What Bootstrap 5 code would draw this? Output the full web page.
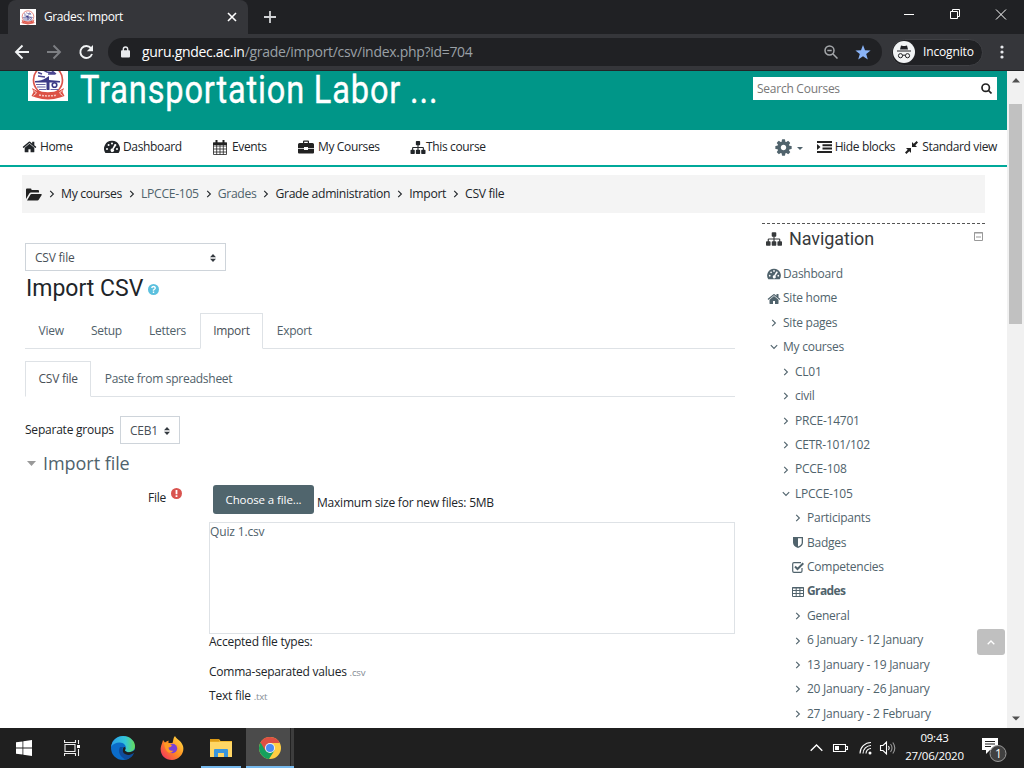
<!DOCTYPE html>
<html lang="en">
<head>
<meta charset="utf-8">
<title>Grades: Import</title>
<meta name="viewport" content="width=device-width, initial-scale=1">
<link href="https://cdn.jsdelivr.net/npm/bootstrap@5.3.0/dist/css/bootstrap.min.css" rel="stylesheet">
<style>
body{width:1024px;height:768px;overflow:hidden;font:12px/18px "Open Sans",sans-serif;letter-spacing:-.22px;color:#212529;background:#fff}
svg{display:block;flex:none}
a{text-decoration:none;color:inherit}
.desk{height:768px}
.tabstrip{height:34px;background:#202124;flex:none}
.tab-on{width:240px;height:34px;margin-left:8px;background:#35363a;border-radius:8px 8px 0 0;color:#fff;padding:0 11px 0 12px;letter-spacing:-.4px}
.tab-on span{line-height:34px}
.winbtns{margin-top:-6px}
.toolbar{height:37px;background:#35363a;border-bottom:1px solid #232427;flex:none;padding-left:14px}
.omni{width:774px;height:28px;margin-left:14px;margin-right:9px;border-radius:14px;background:#202124;color:#9aa0a6;font-size:14px;padding:0 11px 0 13px}
.omni b{font-weight:400;color:#fff}
.url{margin-left:12px;letter-spacing:-.3px}
.incog{width:92px;height:27px;border-radius:14px;background:#202124;border:1px solid #3f4044;color:#fff;font-size:12px;padding-left:1px;letter-spacing:-.15px}
.viewport{height:657px;overflow:hidden;flex:none}
.page{width:1007px;overflow:hidden;flex:none}
.banner{height:59px;background:#009688;padding:0 10px 0 28px}
.crest{width:40px;height:40px;margin-top:-10px}
.site-title{font:400 38.5px/38px Roboto,sans-serif;color:#fff;margin:0 0 0 12px;white-space:nowrap;transform:scaleX(.845);transform-origin:0 0;letter-spacing:1px;-webkit-text-stroke:.4px #fff}
.finder{width:244px;height:23px;background:#fff;margin-top:6px;padding:0 5px 0 4px;color:#777;letter-spacing:-.25px}
.menu{height:37px;border-bottom:2px solid #00a99a;padding:0 10px 1px 22px;letter-spacing:-.35px}
.crumbs{height:38px;background:#f4f4f4;margin:8px 22px 0;padding-left:4px;font-size:12.2px;letter-spacing:-.33px;white-space:nowrap}
.gt{margin:0 6px 0 7px}
.slate{color:#50636c}
.main{width:710px;margin-left:25px}
.pick{height:28px;border:1px solid #ced4da;padding:1px 9px 0 9px;color:#495057}
h2.ttl{font:400 23px/28px Roboto,sans-serif;letter-spacing:0;margin:0 0 0 1px;color:#212529}
.nav-tabs{--bs-nav-link-padding-x:12.6px;--bs-nav-link-padding-y:0;--bs-border-radius:0;--bs-nav-tabs-border-radius:0;--bs-nav-link-color:#50616a;--bs-nav-tabs-link-active-color:#495057}
.nav-tabs .nav-link{line-height:34px;font-size:12px;letter-spacing:-.28px}
.section-head{height:28px;color:#50636c;font-size:18px;letter-spacing:-.05px;margin-top:5px}
.side{width:223px;margin-left:27px;margin-top:10px;border-top:1px dashed #555;color:#50636c}
.side h3{font:400 18px/22px Roboto,sans-serif;letter-spacing:-.1px;color:#373a3c;margin:0 0 0 7px}
.side-head{height:30px;padding:0 1px 0 4px;margin-bottom:8px}
.tree{font-size:12px;letter-spacing:-.24px;line-height:24.43px;white-space:nowrap}
.tree>div{height:24.43px;display:flex;align-items:center}
.tree a{margin-left:2px}
.ic{width:14px;display:flex;justify-content:center;flex:none}
.l1{padding-left:5px}.l2{padding-left:17px}.l3{padding-left:29px}
.pickfile{width:101px;height:29px;border-radius:3px;background:#50656d;color:#fff;font-size:11.5px;font-weight:500;letter-spacing:-.1px;padding:0;line-height:29px;--bs-btn-border-width:0}
.dropbox{width:526px;height:112px;border:1px solid #dee2e6;color:#50616a;letter-spacing:-.15px}
.ext{font-size:9.6px;color:#868e96}
.bar-v{width:17px;background:#f1f1f1}
.thumb{width:13px;height:220px;background:#c1c1c1;margin-top:21px}
.totop{position:absolute;left:977px;top:629px;width:28px;height:26px;border-radius:3px;background:#c0c0c0}
.taskbar{height:40px;background:#1f1f1f;flex:none;color:#fff}
.slot{height:40px;display:flex;align-items:center;justify-content:center}
.run{border-bottom:2px solid #76b9ed;padding-top:2px}
.chrome-slot{width:48px;margin-left:5px;background:linear-gradient(90deg,#4b4b4b 44px,#222 44px 45px,#3d3d3d 45px)}
.clock{width:59px;margin-left:9px;font-size:11.5px;line-height:18px;letter-spacing:-.25px;white-space:nowrap;margin-top:-2px}
</style>
</head>
<body>
<svg width="0" height="0" class="position-absolute">
<symbol id="home" viewBox="0 0 1792 1792"><path fill="currentColor" d="M1472 992v480q0 26-19 45t-45 19h-384v-384h-256v384h-384q-26 0-45-19t-19-45v-480q0-1 .5-3t.5-3l575-474 575 474q1 2 1 6zm223-69l-62 74q-8 9-21 11h-3q-13 0-21-7l-692-577-692 577q-12 8-24 7-13-2-21-11l-62-74q-8-10-7-23.500t11-21.500l719-599q32-26 76-26t76 26l244 204v-195q0-14 9-23t23-9h192q14 0 23 9t9 23v408l219 182q10 8 11 21.500t-7 23.500z"/></symbol>
<symbol id="site" viewBox="0 0 1792 1792"><path fill="currentColor" d="M1792 1248v320q0 40-28 68t-68 28h-320q-40 0-68-28t-28-68v-320q0-40 28-68t68-28h96v-192h-512v192h96q40 0 68 28t28 68v320q0 40-28 68t-68 28h-320q-40 0-68-28t-28-68v-320q0-40 28-68t68-28h96v-192h-512v192h96q40 0 68 28t28 68v320q0 40-28 68t-68 28h-320q-40 0-68-28t-28-68v-320q0-40 28-68t68-28h96v-192q0-52 38-90t90-38h512v-192h-96q-40 0-68-28t-28-68v-320q0-40 28-68t68-28h320q40 0 68 28t28 68v320q0 40-28 68t-68 28h-96v192h512q52 0 90 38t38 90v192h96q40 0 68 28t28 68z"/></symbol>
<symbol id="cog" viewBox="0 0 1792 1792"><path fill="currentColor" d="M1152 896q0-106-75-181t-181-75-181 75-75 181 75 181 181 75 181-75 75-181zm512-109v222q0 12-8 23t-20 13l-185 28q-19 54-39 91 35 50 107 138 10 12 10 25t-9 23q-27 37-99 108t-94 71q-12 0-26-9l-138-108q-44 23-91 38-16 136-29 186-7 28-36 28h-222q-14 0-24.500-8.500t-11.500-21.500l-28-184q-49-16-90-37l-141 107q-10 9-25 9-14 0-25-11-126-114-165-168-7-10-7-23 0-12 8-23 15-21 51-66.500t54-70.500q-27-50-41-99l-183-27q-13-2-21-12.500t-8-23.500v-222q0-12 8-23t19-13l186-28q14-46 39-92-40-57-107-138-10-12-10-24 0-10 9-23 26-36 98.500-107.500t94.500-71.500q13 0 26 10l138 107q44-23 91-38 16-136 29-186 7-28 36-28h222q14 0 24.500 8.500t11.500 21.500l28 184q49 16 90 37l142-107q9-9 24-9 13 0 25 10 129 119 165 170 7 8 7 22 0 12-8 23-15 21-51 66.500t-54 70.500q26 50 41 98l183 28q13 2 21 12.500t8 23.500z"/></symbol>
<symbol id="dash" viewBox="0 0 16 14"><path fill="currentColor" fill-rule="evenodd" d="M8 .8a7.800 7.800 0 0 0-6.600 12.200h13.200A7.800 7.800 0 0 0 8 .8zM3 8a1 1 0 1 1 0 2 1 1 0 0 1 0-2zM4.600 4a1 1 0 1 1 0 2 1 1 0 0 1 0-2zM8 2.400a1 1 0 1 1 0 2 1 1 0 0 1 0-2zM13 8a1 1 0 1 1 0 2 1 1 0 0 1 0-2zM11.400 4a1 1 0 0 1 .6 1.800L9.600 9.200a1.700 1.700 0 1 1-1.300-.6l1.900-3.500A1 1 0 0 1 11.400 4z"/></symbol>
<symbol id="right" viewBox="0 0 6 8"><path d="M1.200 .8L4.400 4 1.200 7.200" fill="none" stroke="currentColor" stroke-width="1.100"/></symbol>
<symbol id="down" viewBox="0 0 8 6"><path d="M.8 1.200L4 4.400 7.200 1.200" fill="none" stroke="currentColor" stroke-width="1.100"/></symbol>
<symbol id="sort" viewBox="0 0 6 8"><path d="M0 3.300L3 0l3 3.300zM0 4.700h6L3 8z" fill="#343a40"/></symbol>
<symbol id="crest" viewBox="0 0 40 40"><path fill="#fff" d="M0 0h40v40H0z"/><circle cx="20" cy="19" r="14.500" fill="#fff" stroke="#d9534a" stroke-width="1.700"/><path d="M10 11.500l4 1.500M10 15l7 1M15 9l4 2 7 1M20 13h7M23 9l5 4" stroke="#4a4690" stroke-width="1.400" fill="none"/><path d="M7 20q7 0 11-3l3-2v4l11 1v1.500H21.500V29h-3v-7.500H7z" fill="#3c3a86"/><path d="M8 23.500h9.500M9 26h8.500M11 28.500h7M22.500 28.500h8" stroke="#6663a3" stroke-width="1.200"/><circle cx="26.500" cy="24" r="2.300" fill="none" stroke="#3c3a86" stroke-width="1.600"/><path d="M4 27l4.500 2.500q11.500 3.500 23 0L36 27l-1.500 4 2 4-4.500 1.500q-12 4-24 0L3.500 35l2-4z" fill="#dc5145"/><path d="M5.500 29l3 3-3 2.500M34.500 29l-3 3 3 2.500" stroke="#fff" stroke-width=".8" fill="none"/><path d="M11 34q9 1.800 18 0" stroke="#f6c5c0" stroke-dasharray="2 1" fill="none" stroke-width="1.500"/></symbol>
</svg>
<div class="desk d-flex flex-column">
<header class="tabstrip d-flex align-items-center">
 <div class="tab-on d-flex align-items-center"><svg width="16" height="16"><use href="#crest"/></svg><span class="ms-2 flex-grow-1">Grades: Import</span><svg width="10" height="10" viewBox="0 0 10 10"><path d="M1 1l8 8M9 1L1 9" stroke="#fff" stroke-width="1.600"/></svg></div>
 <svg class="ms-3" width="12" height="12" viewBox="0 0 12 12"><path d="M6 0v12M0 6h12" stroke="#d2d4d6" stroke-width="1.800"/></svg>
 <svg class="ms-auto winbtns" width="120" height="14" viewBox="0 0 120 14" fill="none" stroke="#fff"><path d="M0 7.500h10M46.500 4.500h7v7h-7zM48.500 4.500v-2h7v7h-2M92 2.500l10 10M102 2.500l-10 10"/></svg>
</header>
<div class="toolbar d-flex align-items-center">
 <svg width="80" height="16" viewBox="0 0 80 16" fill="none" stroke="#f1f3f4" stroke-width="1.900"><path d="M15 8H2.500M8.500 1.500L2 8l6.500 6.500"/><path stroke="#7d7f83" d="M33 8h12.500M39.500 1.500L46 8l-6.500 6.500"/><path d="M77 4.200A6 6 0 1 0 78 10"/><path fill="#f1f3f4" stroke="none" d="M79 1v6.200h-6.200z"/></svg>
 <div class="omni d-flex align-items-center"><svg width="9" height="12" viewBox="0 0 9 12"><path d="M2.300 5V3.200a2.200 2.200 0 0 1 4.400 0V5" fill="none" stroke="#e8eaed" stroke-width="1.400"/><rect y="4.300" width="9" height="7.300" rx="1" fill="#e8eaed"/></svg><span class="url flex-grow-1"><b>guru.gndec.ac.in</b>/grade/import/csv/index.php?id=704</span>
 <svg width="14" height="14" viewBox="0 0 14 14" fill="none" stroke="#a5a8ab" stroke-width="1.500"><circle cx="5.500" cy="5.500" r="4.500"/><path d="M9 9l4.500 4.500M3.300 5.500h4.400"/></svg>
 <svg style="margin-left:17px" width="16" height="15" viewBox="0 0 16 15"><path d="M8 0l2 5.300 5.600.2-4.400 3.500 1.600 5.500L8 11.300l-4.800 3.200 1.600-5.500L.4 5.500 6 5.300z" fill="#8ab4f8"/></svg></div>
 <div class="incog d-flex align-items-center"><svg width="22" height="22" viewBox="0 0 22 22"><circle cx="11" cy="11" r="11" fill="#f1f3f4"/><path d="M4 9.500h14v1H4zM7 8.500l1-4 2 .5h2l2-.5 1 4z" fill="#202124"/><path d="M9.500 14.500q1.500-1 3 0" fill="none" stroke="#202124"/><circle cx="7.500" cy="14.700" r="2.100" fill="none" stroke="#202124"/><circle cx="14.500" cy="14.700" r="2.100" fill="none" stroke="#202124"/></svg><span class="ms-2">Incognito</span></div>
 <svg style="margin-left:17px" width="4" height="14" viewBox="0 0 4 14" fill="#e8eaed"><circle cx="2" cy="2" r="1.600"/><circle cx="2" cy="7" r="1.600"/><circle cx="2" cy="12" r="1.600"/></svg>
</div>
<div class="viewport d-flex">
<div class="page">
 <div class="banner d-flex align-items-start"><svg class="crest"><use href="#crest"/></svg><h1 class="site-title">Transportation Labor ...</h1>
  <div class="finder d-flex align-items-center justify-content-between ms-auto"><span>Search Courses</span><svg width="11" height="11" viewBox="0 0 11 11" fill="none" stroke="#222" stroke-width="1.700"><circle cx="4.700" cy="4.700" r="3.700"/><path d="M7.500 7.500l3 3"/></svg></div></div>
 <nav class="menu d-flex align-items-center">
  <svg width="15" height="16"><use href="#home"/></svg><a style="margin-left:3px;width:64px">Home</a>
  <svg width="16" height="14"><use href="#dash"/></svg><a style="margin-left:3px;width:90px">Dashboard</a>
  <svg width="14" height="15" viewBox="0 0 14 15"><path d="M.5 3h13v11.500H.5zM.5 6h13M.5 9h13M.5 12h13M3.700 5v9.500M7 5v9.500M10.300 5v9.500" stroke="#222" fill="none" stroke-width=".8"/><path d="M0 2.500h14V5H0zM2.500 0h2v4h-2zM9.500 0h2v4h-2z" fill="#222"/></svg><a style="margin-left:5px;width:66px">Events</a>
  <svg width="16" height="14" viewBox="0 0 16 14"><path fill="#222" d="M5 3V1.500Q5 .5 6 .5h4q1 0 1 1V3h3.500Q16 3 16 4.500V8h-6V7H6v1H0V4.500Q0 3 1.500 3zM6.200 3h3.600V1.700H6.200zM0 8.800h6V10h4V8.800h6v3.700q0 1-1 1H1q-1 0-1-1z"/></svg><a style="margin-left:4px;width:92px">My Courses</a>
  <svg width="16" height="15"><use href="#site"/></svg><a class="me-auto">This course</a>
  <svg width="19" height="19" class="slate"><use href="#cog"/></svg><svg style="margin:3px 14px 0 4px" width="6" height="3" viewBox="0 0 6 3"><path d="M0 0h6L3 3z" fill="#50636c"/></svg>
  <svg width="15" height="12" viewBox="0 0 15 12"><path d="M0 0h15v2H0zM5.500 3.300H15v2H5.500zM5.500 6.600H15v2H5.500zM0 10h15v2H0zM0 3l3.500 3L0 9z" fill="#222"/></svg><a style="margin-left:3px">Hide blocks</a>
  <svg style="margin:0 4px 0 10px" width="13" height="13" viewBox="0 0 13 13"><path d="M1 7h5v5L4.300 10.300 1.400 13 0 11.600 2.700 8.700zM7 1l1.700 1.700L11.600 0 13 1.400l-2.700 2.900L12 6H7z" fill="#222"/></svg><a>Standard view</a>
 </nav>
 <nav class="crumbs d-flex align-items-center">
  <svg width="16" height="13" viewBox="0 0 16 13"><path fill="#222" d="M0 11V1.500Q0 .5 1 .5h3.500q1 0 1 1V2H12q1 0 1 1v1.500H5Q4 4.500 3.300 5.500zM1 12.500l3.500-6Q4.800 6 5.500 6H15q1.200 0 .7 1l-3 4.700q-.4.800-1.200.8z"/></svg>
  <svg class="gt" width="6" height="8"><use href="#right"/></svg><a>My courses</a>
  <svg class="gt" width="6" height="8"><use href="#right"/></svg><a class="slate">LPCCE-105</a>
  <svg class="gt" width="6" height="8"><use href="#right"/></svg><a class="slate">Grades</a>
  <svg class="gt" width="6" height="8"><use href="#right"/></svg><a>Grade administration</a>
  <svg class="gt" width="6" height="8"><use href="#right"/></svg><a>Import</a>
  <svg class="gt" width="6" height="8"><use href="#right"/></svg><a>CSV file</a>
 </nav>
 <div class="d-flex">
 <main class="main">
  <div class="pick d-flex align-items-center justify-content-between" style="margin-top:30px;width:201px"><span>CSV file</span><svg width="6" height="8"><use href="#sort"/></svg></div>
  <div class="d-flex align-items-center" style="margin-top:4px;height:28px"><h2 class="ttl">Import CSV</h2><svg style="margin:0 0 0 5px" width="11" height="11" viewBox="0 0 11 11"><circle cx="5.500" cy="5.500" r="5.500" fill="#5bc0de"/><path d="M3.700 4Q4 2.500 5.500 2.500T7.300 4Q7.300 5 5.500 6v.8M5.500 7.600v1.500" fill="none" stroke="#fff" stroke-width="1.400"/></svg></div>
  <ul class="nav nav-tabs" style="margin-top:10px"><li class="nav-item"><a class="nav-link">View</a></li><li class="nav-item"><a class="nav-link">Setup</a></li><li class="nav-item"><a class="nav-link">Letters</a></li><li class="nav-item"><a class="nav-link active">Import</a></li><li class="nav-item"><a class="nav-link">Export</a></li></ul>
  <ul class="nav nav-tabs" style="margin-top:12px"><li class="nav-item"><a class="nav-link active">CSV file</a></li><li class="nav-item"><a class="nav-link">Paste from spreadsheet</a></li></ul>
  <div class="d-flex align-items-center" style="margin-top:19px"><span style="width:95px">Separate groups</span><div class="pick d-flex align-items-center justify-content-between" style="width:60px"><span>CEB1</span><svg width="6" height="8"><use href="#sort"/></svg></div></div>
  <div class="section-head d-flex align-items-center"><svg style="margin:0 7px 0 2px" width="9" height="5" viewBox="0 0 9 5"><path d="M0 0h9L4.500 5z" fill="#999"/></svg>Import file</div>
  <div class="d-flex" style="margin-top:8px">
   <div class="d-flex" style="width:184px;padding-left:123px;padding-top:4px">File<svg style="margin:-1px 0 0 5px" width="11" height="11" viewBox="0 0 11 11"><circle cx="5.500" cy="5.500" r="5.500" fill="#d9534f"/><path d="M5.500 2v4.200M5.500 7.300v1.700" stroke="#fff" stroke-width="1.800"/></svg></div>
   <div>
    <div class="d-flex" style="padding-left:4px"><button class="btn pickfile">Choose a file...</button><span style="margin:9px 0 0 3px">Maximum size for new files: 5MB</span></div>
    <div class="dropbox" style="margin-top:8px">Quiz 1.csv</div>
    <div style="margin-top:-1px">Accepted file types:</div>
    <div style="margin-top:12px">Comma-separated values <span class="ext">.csv</span></div>
    <div style="margin-top:5px">Text file <span class="ext">.txt</span></div>
   </div>
  </div>
 </main>
 <aside class="side">
  <div class="side-head d-flex align-items-center"><svg width="16" height="16" color="#373a3c"><use href="#site"/></svg><h3>Navigation</h3><svg class="ms-auto" style="margin-top:-6px;margin-right:1px" width="9" height="9" viewBox="0 0 9 9"><path d="M.5.500h8v8h-8zM0 1h9M2 5h5" stroke="#999" fill="none"/></svg></div>
  <div class="tree">
   <div class="l1"><span class="ic"><svg width="14" height="12"><use href="#dash"/></svg></span><a>Dashboard</a></div>
   <div class="l1"><span class="ic"><svg width="14" height="14"><use href="#home"/></svg></span><a>Site home</a></div>
   <div class="l1"><span class="ic"><svg width="6" height="8"><use href="#right"/></svg></span><a>Site pages</a></div>
   <div class="l1"><span class="ic"><svg width="8" height="6"><use href="#down"/></svg></span><a>My courses</a></div>
   <div class="l2"><span class="ic"><svg width="6" height="8"><use href="#right"/></svg></span><a>CL01</a></div>
   <div class="l2"><span class="ic"><svg width="6" height="8"><use href="#right"/></svg></span><a>civil</a></div>
   <div class="l2"><span class="ic"><svg width="6" height="8"><use href="#right"/></svg></span><a>PRCE-14701</a></div>
   <div class="l2"><span class="ic"><svg width="6" height="8"><use href="#right"/></svg></span><a>CETR-101/102</a></div>
   <div class="l2"><span class="ic"><svg width="6" height="8"><use href="#right"/></svg></span><a>PCCE-108</a></div>
   <div class="l2"><span class="ic"><svg width="8" height="6"><use href="#down"/></svg></span><a>LPCCE-105</a></div>
   <div class="l3"><span class="ic"><svg width="6" height="8"><use href="#right"/></svg></span><a>Participants</a></div>
   <div class="l3"><span class="ic"><svg width="10" height="11" viewBox="0 0 10 11"><path fill-rule="evenodd" fill="currentColor" d="M0 0h10v5.500Q10 9 5 11 0 9 0 5.500zM5 1.300v8.300q3.700-1.700 3.700-4.200V1.300z"/></svg></span><a>Badges</a></div>
   <div class="l3"><span class="ic"><svg width="12" height="11" viewBox="0 0 12 11" fill="none" stroke="currentColor"><path stroke-width="1.200" d="M10 6v3q0 1.300-1.300 1.300H2Q.7 10.300.7 9V2Q.7.700 2 .7h7"/><path stroke-width="2" d="M3 4.500L5.500 7l5.800-5.700"/></svg></span><a>Competencies</a></div>
   <div class="l3"><span class="ic"><svg width="12" height="10" viewBox="0 0 12 10" fill="none" stroke="currentColor"><path d="M.5.500h11v9H.5zM0 1h12M.5 3.500h11M.5 6.500h11M4.200 1v8.500M7.900 1v8.500"/></svg></span><a class="fw-bold" style="letter-spacing:-.6px">Grades</a></div>
   <div class="l3"><span class="ic"><svg width="6" height="8"><use href="#right"/></svg></span><a>General</a></div>
   <div class="l3"><span class="ic"><svg width="6" height="8"><use href="#right"/></svg></span><a>6 January - 12 January</a></div>
   <div class="l3"><span class="ic"><svg width="6" height="8"><use href="#right"/></svg></span><a>13 January - 19 January</a></div>
   <div class="l3"><span class="ic"><svg width="6" height="8"><use href="#right"/></svg></span><a>20 January - 26 January</a></div>
   <div class="l3"><span class="ic"><svg width="6" height="8"><use href="#right"/></svg></span><a>27 January - 2 February</a></div>
  </div>
 </aside>
 </div>
</div>
<div class="bar-v d-flex flex-column align-items-center"><svg style="margin-top:7px" width="8" height="5" viewBox="0 0 8 5"><path d="M0 4.500h8L4 0z" fill="#505050"/></svg><div class="thumb"></div><svg class="mt-auto" style="margin-bottom:7px" width="8" height="5" viewBox="0 0 8 5"><path d="M0 .5h8L4 4.500z" fill="#505050"/></svg></div>
<a class="totop d-flex align-items-center justify-content-center"><svg width="8" height="5" viewBox="0 0 8 5"><path d="M.7 4.300L4 1l3.300 3.300" stroke="#fff" stroke-width="1.300" fill="none"/></svg></a>
</div>
<footer class="taskbar d-flex">
 <div class="slot" style="width:48px"><svg width="16" height="16" viewBox="0 0 16 16" fill="#fff"><path d="M0 2.300l6.500-.9v6.200H0zM7.300 1.300L16 0v7.600H7.300zM0 8.400h6.500v6.200L0 13.700zM7.300 8.400H16V16l-8.700-1.200z"/></svg></div>
 <div class="slot" style="width:48px"><svg width="17" height="16" viewBox="0 0 17 16" fill="none" stroke="#eee" stroke-width="1.100"><path d="M1 4.500h10v7H1zM.5 0v2.500h11V0M.5 16v-2.500h11V16M14.500 0v4M14.500 9v7"/><path fill="#fff" stroke="none" d="M13 5h3v3h-3z"/></svg></div>
 <div class="slot" style="width:53px;padding-left:1px"><svg width="24" height="24" viewBox="0 0 24 24"><defs><linearGradient id="eg"><stop stop-color="#2a9fe8"/><stop offset=".6" stop-color="#34c6d8"/><stop offset="1" stop-color="#66dc58"/></linearGradient></defs><circle cx="12" cy="12" r="12" fill="#0b6cc9"/><path d="M.2 11C1 4 6 0 12 0c7 0 12 5 12 10 0 4-3 6-6 6-3.500 0-5-1.200-3.500-3C16 10 13 6.500 8.500 6.500 5 6.500 1.500 8 .2 11z" fill="url(#eg)"/><path d="M9 11c-3 5 1 11 6 12.500 4-.8 7-4 8-7-6 4-14 1-11-5.500z" fill="#0f4c9c"/><path d="M12.200 12c-2 4.500 2.300 7.700 6.800 6.700l5-2V13.500c-2 2.500-6 3.100-8 2.400-2-.8-2.500-1.500-1.500-2.900.5-2-1.800-2.800-2.300-1z" fill="#1f1f1f"/></svg></div>
 <div class="slot" style="width:46px"><svg width="24" height="24" viewBox="0 0 24 24"><defs><linearGradient id="fg" x1="1" y1="0" x2="0" y2="1"><stop stop-color="#ffe84a"/><stop offset=".5" stop-color="#ff8d20"/><stop offset="1" stop-color="#f1236b"/></linearGradient></defs><path d="M15 0c1 3 6 4 8 10 2 7-4 14-11 14S0 19 .7 12C1 9 2.500 7 3 4l2 2.500c2-1 2-1.500 3.500-2V7h4c1-3 .5-5 2.500-7z" fill="url(#fg)"/><circle cx="12.500" cy="12.500" r="4.700" fill="#7b41d6"/><path d="M4 7q5-1 8 2.500-1 2-3.500 2 .5 4 5 3-2 3-5 2Q5 15 4 7z" fill="#ff9a24"/></svg></div>
 <div class="slot run" style="width:40px;margin-left:6px"><svg width="22" height="19" viewBox="0 0 22 19"><path d="M0 0h9l1.500 2H22v16H0z" fill="#f3b92f"/><path d="M0 3h22v15H0z" fill="#ffd665"/><path d="M0 0h9v2.500H0z" fill="#dc9a16"/><path d="M4 18v-7q0-1 1-1h12q1 0 1 1v7h-4v-4H8v4z" fill="#3a96dd"/></svg></div>
 <div class="slot run chrome-slot"><svg width="22" height="22" viewBox="0 0 22 22"><circle cx="11" cy="11" r="11" fill="#ffce44"/><path d="M11 11L1.500 5.500A11 11 0 0 0 10 22l5.500-8.500z" fill="#16a05d"/><path d="M1.500 5.500A11 11 0 0 1 20.700 6H11L6.500 13.700z" fill="#dd4f43"/><circle cx="11" cy="11" r="5" fill="#f1f1f1"/><circle cx="11" cy="11" r="4" fill="#4a8af4"/></svg></div>
 <div class="ms-auto d-flex align-items-center">
  <svg width="86" height="16" viewBox="0 0 86 16" fill="none" stroke="#fff" stroke-width="1.100"><path d="M.7 10.700L6.500 5l5.800 5.700" stroke-width="1.400"/><path d="M23.500 4.500h12v7h-12zM36 6.500h1.500v3H36"/><path d="M25 6h4v4h-4z" fill="#fff" stroke="none"/><path d="M50 13.500A11 11 0 0 1 61 2.500M53 13.500a8 8 0 0 1 8-8M56 13.500a5 5 0 0 1 5-5"/><circle cx="60" cy="13" r="1.500" fill="#fff" stroke="none"/><path d="M70.500 5.500h2.500l3.500-3.500v12L73 10.500h-2.500zM78.500 6q1.500 2 0 4"/><path stroke="#999" d="M80.500 4q3 4 0 8M82.800 2.500q4 5.500 0 11"/></svg>
  <div class="clock text-center">09:43<br>27/06/2020</div>
  <svg style="margin:4px 17px 0 18px" width="25" height="26" viewBox="0 0 25 26"><path d="M0 1h16v12H8l-4 4v-4H0z" fill="#fff"/><path d="M3 4.500h10M3 7h10M3 9.500h6" stroke="#1f1f1f"/><circle cx="16" cy="16.500" r="8" fill="#414141" stroke="#9a9a9a"/><text x="13" y="21" fill="#fff" font-family="Open Sans" font-size="12">1</text></svg>
 </div>
</footer>
</div>
<script src="https://cdn.jsdelivr.net/npm/bootstrap@5.3.0/dist/js/bootstrap.bundle.min.js"></script>
</body>
</html>
